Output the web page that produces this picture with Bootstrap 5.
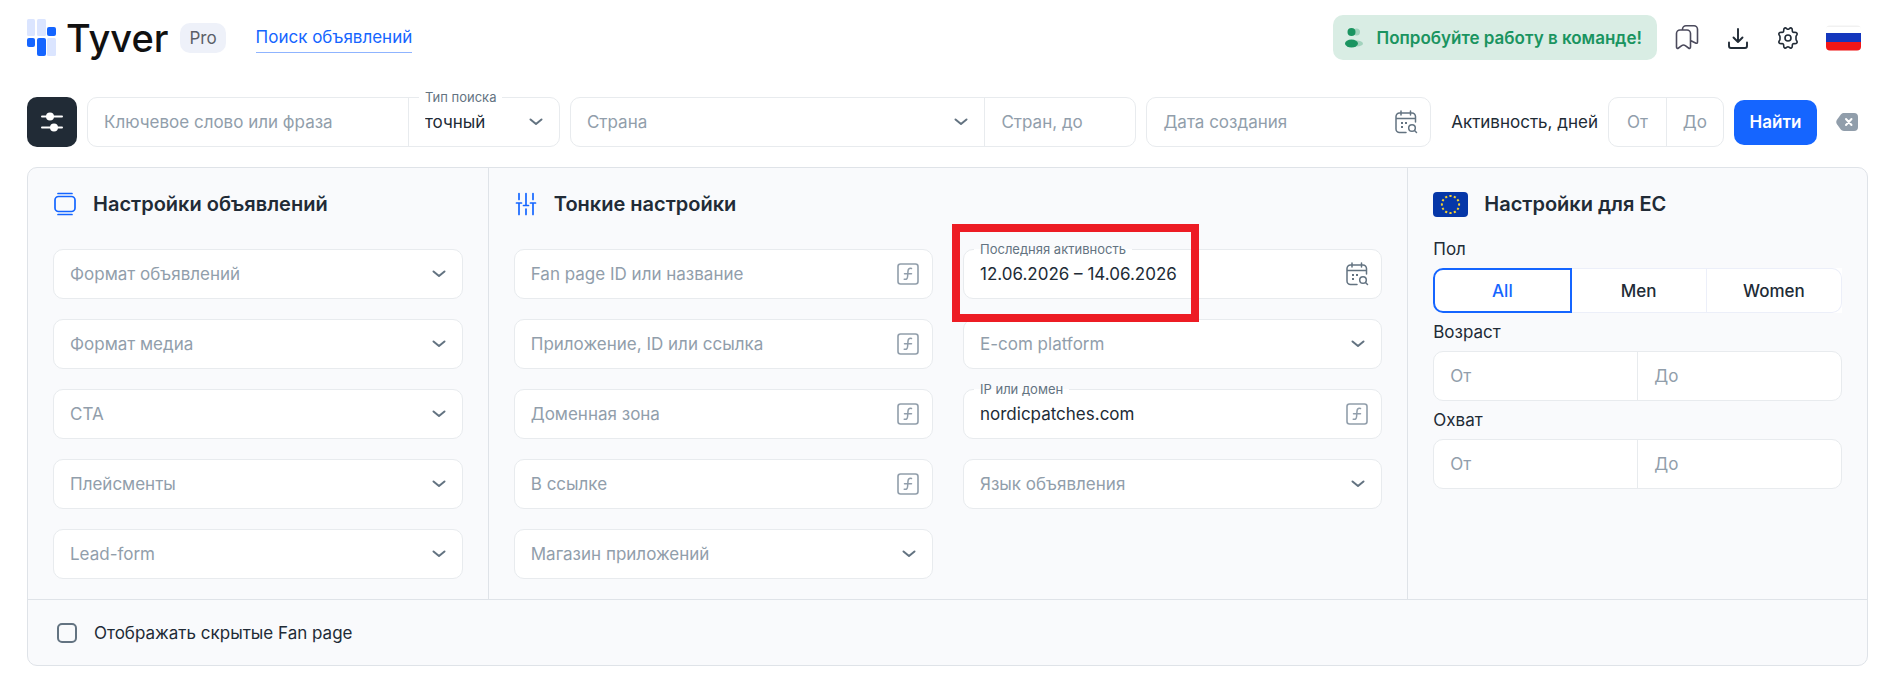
<!DOCTYPE html>
<html lang="ru">
<head>
<meta charset="utf-8">
<meta name="viewport" content="width=device-width, initial-scale=1">
<title>Tyver Pro – Поиск объявлений</title>
<link href="https://cdn.jsdelivr.net/npm/bootstrap@5.3.0/dist/css/bootstrap.min.css" rel="stylesheet">
<style>
:root{--ink:#212b36;--muted:#919eab;--mid:#637381;--line:#e8ebee;--panel-line:#dfe3e8;--brand:#1565ff}
body{font-family:Inter,"Liberation Sans",sans-serif;font-size:17px;line-height:24px;color:var(--ink);background:#fff}
svg{display:block;flex:none}
.page{padding:15px 30px 24px 27px}
.topbar{height:45px}
.brand{gap:10px;color:#111;text-decoration:none}
.brand-name{font-size:38px;line-height:44px;font-weight:500}
.pro-pill{background:#eef1f9;color:#5b5f68;border-radius:10px;padding:3px 9px;font-size:17px;margin:0 30px 0 12px}
.nav-search{color:var(--brand);text-decoration:none;border-bottom:1px solid #8fb4ff;padding:2px 0 3px}
.team-btn{background:#d9ede4;color:#1a9460;border:0;border-radius:10px;height:45px;padding:0 15px 0 12px;gap:13px;font-weight:600}
.tool-btn{border:0;background:none;padding:0;color:var(--ink)}
.tools{gap:26px;margin:0 7px 0 17px}
.search-row{margin-top:37px;gap:10px}
.filter-btn{width:50px;height:50px;background:#212b36;border:0;border-radius:10px;padding:0}
.joined{border:1px solid var(--line);border-radius:10px;background:#fff;height:50px}
.field{position:relative;background:#fff;border:1px solid var(--line);border-radius:10px;height:50px}
.cell{position:relative}
.ctl{display:block;width:100%;height:48px;border:0;background:transparent;padding:0 16px;color:var(--ink);border-radius:10px;outline:0;appearance:none;min-width:0}
.joined>*+*{border-left:1px solid var(--line)}
.ctl::placeholder{color:var(--muted);opacity:1}
.ctl:focus-visible{box-shadow:0 0 0 2px #1565ff55}
select.ctl{padding-right:44px;background:url("data:image/svg+xml,%3Csvg xmlns='http://www.w3.org/2000/svg' width='14' height='8' fill='none' stroke='%23637381' stroke-width='2' stroke-linecap='round' stroke-linejoin='round'%3E%3Cpath d='M1.5 1.5 7 6l5.500-4.500'/%3E%3C/svg%3E") no-repeat right 16px center}
select.empty{color:var(--muted)}
.with-icon{padding-right:50px}
.float-label{position:absolute;top:-11px;left:10px;padding:0 6px;font-size:13px;line-height:20px;color:var(--mid);background:linear-gradient(transparent 50%,#fff 50%);white-space:nowrap}
.field-icon{position:absolute;right:12px;top:0;height:48px;border:0;background:none;padding:0;display:flex;align-items:center}
.w-type,.w-limit{flex:0 0 151px}
.w-keyword{flex:473 1 0}.w-country{flex:567 1 0}.w-date{flex:284 1 0}
.w-days{flex:0 0 116px}
.w-days .ctl{text-align:center;padding:0 4px}
.days-label{margin-left:10px}
.clear-btn{margin:0 10px 0 9px}
.go-btn{height:45px;width:83px;border:0;border-radius:10px;background:var(--brand);color:#fff;font-weight:600;padding:0}
.settings{margin-top:20px;border:1px solid var(--panel-line);border-radius:10px;background:#f9fafc}
.pane{padding:23px 25px 20px}
.pane+.pane{border-left:1px solid var(--panel-line)}
.pane-head{height:26px;gap:16px}
.pane-head h2{font-size:20px;line-height:26px;font-weight:600;margin:0}
.stack{display:grid;gap:20px;margin-top:32px}
.stack-2{grid-template-columns:1fr 1fr;column-gap:30px}
.group-label{display:block;margin:7px 0}
.pane-head+.group-label{margin-top:20px}
.gender{background:#fff;height:45px;border-radius:10px 0 0 10px}
.gender label{flex:1;display:flex;align-items:center;justify-content:center;border:1px solid #eceff9;border-left:0;font-weight:500;cursor:pointer}
.gender label:first-of-type{border-radius:10px 0 0 10px}
.gender label:last-of-type{border-radius:0 10px 10px 0}
.gender .btn-check:checked+label{border:2px solid var(--brand);color:var(--brand)}
.settings-foot{border-top:1px solid var(--panel-line);height:66px;padding:0 29px;gap:17px}
.settings-foot .form-check-input{width:20px;height:20px;margin:0;border:2px solid var(--mid);border-radius:5px;background-color:transparent}
.settings-foot .form-check-input:checked{background-color:var(--brand)}
.highlight{position:absolute;left:-12px;top:-26px;width:247px;height:98px;border:8px solid #ed1c24;pointer-events:none;z-index:2}
</style>
</head>
<body>
<svg class="d-none" xmlns="http://www.w3.org/2000/svg">
  <symbol id="i-func" viewBox="0 0 22 22"><rect x="1" y="1" width="20" height="20" rx="2.500" fill="none" stroke="#919eab" stroke-width="1.600"/><path d="M14.500 5.500c-2.600-.6-3.300.6-3.500 2.600l-.4 5.400c-.2 2.200-1 3.200-3.400 2.700M7.500 10.800h7" fill="none" stroke="#919eab" stroke-width="1.500" stroke-linecap="round"/></symbol>
  <symbol id="i-cal" viewBox="0 0 24 24"><g fill="none" stroke="#637381" stroke-width="1.500" stroke-linecap="round"><path d="M21.500 12V6.500a3.500 3.500 0 0 0-3.500-3.500H5.500A3.500 3.500 0 0 0 2 6.500V19a3.500 3.500 0 0 0 3.500 3.500h6.500M2 8.500h19.500M7 1v4M16.500 1v4"/><circle cx="18" cy="18" r="3.300"/><path d="m20.500 20.500 2 2"/></g><path d="M7 12h2v2H7zM11 12h2v2h-2zM7 16h2v2H7z" fill="#637381"/></symbol>
</svg>
<div class="page">
  <header class="topbar d-flex align-items-center">
    <a class="brand d-flex align-items-center" href="#">
      <svg width="29" height="38" viewBox="0 0 29 38"><g fill="#dbe5ff"><rect width="8" height="17" rx="1.500"/><rect x="10" width="9" height="17" rx="1.500"/><rect x="20" y="19" width="9" height="18" rx="1.500"/></g><g fill="#1565ff"><rect x="20" y="8" width="9" height="9" rx="2"/><rect y="19" width="8" height="9" rx="2"/><rect x="10" y="19" width="9" height="18" rx="2"/></g></svg>
      <span class="brand-name">Tyver</span>
    </a>
    <span class="pro-pill">Pro</span>
    <a class="nav-search" href="#">Поиск объявлений</a>
    <button type="button" class="team-btn d-flex align-items-center ms-auto">
      <svg width="18" height="22" viewBox="0 0 18 22"><g fill="#a2d3bd"><circle cx="11.500" cy="5" r="3.500"/><ellipse cx="12" cy="16.500" rx="6" ry="3"/></g><g fill="#1a9460"><circle cx="6.500" cy="5" r="4"/><ellipse cx="6.500" cy="16.500" rx="6.500" ry="4"/></g></svg>
      <span>Попробуйте работу в команде!</span>
    </button>
    <div class="tools d-flex align-items-center">
      <button type="button" class="tool-btn" aria-label="Закладки"><svg width="26" height="26" viewBox="0 0 26 26" fill="none" stroke="#4b4a5c" stroke-width="1.600" stroke-linejoin="round"><path d="M2.500 8.500A3.500 3.500 0 0 1 6 5h7a3.500 3.500 0 0 1 3.500 3.500V22c0 1.300-1 1.700-2 1l-3.200-2.300c-1.200-.9-2.400-.9-3.600 0L4.500 23c-1 .7-2 .3-2-1zM8.500 5V4.300a3.500 3.500 0 0 1 3.500-3.500h8a3.500 3.500 0 0 1 3.500 3.500V17c0 1.300-.9 1.600-2 1l-5-2.500"/></svg></button>
      <button type="button" class="tool-btn" aria-label="Скачать"><svg width="24" height="24" viewBox="0 0 24 24" fill="none" stroke="#212b36" stroke-width="1.900" stroke-linecap="round" stroke-linejoin="round"><path d="M12 3v13M7.500 11.500 12 16l4.500-4.500M3 16.500V20a2 2 0 0 0 2 2h14a2 2 0 0 0 2-2v-3.500"/></svg></button>
      <button type="button" class="tool-btn" aria-label="Настройки"><svg width="24" height="24" viewBox="0 0 24 24" fill="none" stroke="#212b36" stroke-width="1.600" stroke-linejoin="round"><circle cx="12" cy="12" r="3"/><path d="M8.700 2c1.500-.8 2 1.300 3.300 1.300S13.800 1.200 15.300 2c1.700.9.500 2.600 1.300 3.800.8 1.300 3-.3 4.200 1.200 1.300 1.700-.8 2.200-.8 3.800v2.400c0 1.600 2.100 2.100.8 3.800-1.200 1.500-3.400-.1-4.200 1.200-.8 1.200.4 2.900-1.300 3.800-1.500.8-2-1.300-3.300-1.300S10.200 22.800 8.700 22c-1.700-.9-.5-2.600-1.300-3.800-.8-1.300-3 .3-4.200-1.200-1.300-1.700.8-2.200.8-3.800v-2.400C4 9.200 1.900 8.700 3.200 7c1.200-1.500 3.400.1 4.200-1.200C8.200 4.600 7 2.900 8.700 2z"/></svg></button>
      <button type="button" class="tool-btn" aria-label="Русский"><svg width="35" height="26" viewBox="0 0 35 26"><clipPath id="ru"><rect y=".5" width="35" height="25" rx="4"/></clipPath><g clip-path="url(#ru)"><path fill="#f1f1f1" d="M0 0h35v26H0z"/><path fill="#fff" d="M0 2h35v6H0z"/><path fill="#1437bd" d="M0 8h35v9H0z"/><path fill="#f31616" d="M0 17h35v9H0z"/></g></svg></button>
    </div>
  </header>

  <form class="search-row d-flex align-items-center">
    <button type="button" class="filter-btn d-flex align-items-center justify-content-center" aria-label="Фильтры"><svg width="22" height="20" viewBox="0 0 22 20" stroke="#fff" fill="#fff" stroke-width="2" stroke-linecap="round"><path d="M1 4.500h20M1 15.500h20"/><circle cx="9" cy="4.500" r="3"/><circle cx="13" cy="15.500" r="3"/></svg></button>
    <div class="joined w-keyword d-flex">
      <div class="cell flex-fill"><input class="ctl" type="text" placeholder="Ключевое слово или фраза" aria-label="Ключевое слово или фраза"></div>
      <div class="cell w-type"><label class="float-label" for="type">Тип поиска</label><select class="ctl" id="type"><option>точный</option><option>широкий</option></select></div>
    </div>
    <div class="joined w-country d-flex">
      <div class="cell flex-fill"><select class="ctl empty" aria-label="Страна"><option>Страна</option></select></div>
      <div class="cell w-limit"><input class="ctl" type="text" placeholder="Стран, до" aria-label="Стран, до"></div>
    </div>
    <div class="field w-date"><input class="ctl with-icon" type="text" placeholder="Дата создания" aria-label="Дата создания"><button type="button" class="field-icon" aria-label="Календарь"><svg width="24" height="24"><use href="#i-cal"/></svg></button></div>
    <label for="from" class="days-label text-nowrap">Активность, дней</label>
    <div class="joined w-days d-flex">
      <input class="ctl" id="from" type="text" placeholder="От"><input class="ctl rounded-0" type="text" placeholder="До" aria-label="Активность до">
    </div>
    <button type="submit" class="go-btn">Найти</button>
    <button type="reset" class="tool-btn clear-btn" aria-label="Очистить"><svg width="22" height="18" viewBox="0 0 22 18"><path fill="#919eab" d="M8 0h10a4 4 0 0 1 4 4v10a4 4 0 0 1-4 4H8c-1.500 0-2.500-.6-3.400-1.700L1 11.300C0 9.900 0 8.100 1 6.700l3.600-5C5.500.6 6.500 0 8 0z"/><path d="m10 6 5.500 6M15.500 6 10 12" stroke="#fff" stroke-width="2" stroke-linecap="round"/></svg></button>
  </form>

  <section class="settings">
    <div class="row g-0">
      <div class="col-3 pane">
        <div class="pane-head d-flex align-items-center">
          <svg width="24" height="24" viewBox="0 0 24 24" fill="none" stroke="#1565ff" stroke-width="1.700" stroke-linecap="round"><rect x="2" y="4.500" width="20" height="15" rx="3.500"/><path d="M5 1.500h14M5 22.500h14"/></svg>
          <h2>Настройки объявлений</h2>
        </div>
        <div class="stack">
          <div class="field"><select class="ctl empty" aria-label="Формат объявлений"><option>Формат объявлений</option></select></div>
          <div class="field"><select class="ctl empty" aria-label="Формат медиа"><option>Формат медиа</option></select></div>
          <div class="field"><select class="ctl empty" aria-label="CTA"><option>CTA</option></select></div>
          <div class="field"><select class="ctl empty" aria-label="Плейсменты"><option>Плейсменты</option></select></div>
          <div class="field"><select class="ctl empty" aria-label="Lead-form"><option>Lead-form</option></select></div>
        </div>
      </div>
      <div class="col-6 pane">
        <div class="pane-head d-flex align-items-center">
          <svg width="24" height="24" viewBox="0 0 24 24" fill="none" stroke="#1565ff" stroke-width="1.700" stroke-linecap="round"><path d="M5 1.500v6M5 11v11.500M2.500 11h5M12 1.500v12M9.500 13.500h5M12 17v5.500M19 1.500v6M19 11v11.500M16.500 11h5"/></svg>
          <h2>Тонкие настройки</h2>
        </div>
        <div class="stack stack-2">
          <div class="field"><input class="ctl with-icon" type="text" placeholder="Fan page ID или название" aria-label="Fan page ID или название"><button type="button" class="field-icon" aria-label="Функция"><svg width="24" height="22"><use href="#i-func"/></svg></button></div>
          <div class="field"><label class="float-label" for="last">Последняя активность</label><input class="ctl with-icon" id="last" type="text" value="12.06.2026 – 14.06.2026"><button type="button" class="field-icon" aria-label="Календарь"><svg width="24" height="24"><use href="#i-cal"/></svg></button><div class="highlight"></div></div>
          <div class="field"><input class="ctl with-icon" type="text" placeholder="Приложение, ID или ссылка" aria-label="Приложение, ID или ссылка"><button type="button" class="field-icon" aria-label="Функция"><svg width="24" height="22"><use href="#i-func"/></svg></button></div>
          <div class="field"><select class="ctl empty" aria-label="E-com platform"><option>E-com platform</option></select></div>
          <div class="field"><input class="ctl with-icon" type="text" placeholder="Доменная зона" aria-label="Доменная зона"><button type="button" class="field-icon" aria-label="Функция"><svg width="24" height="22"><use href="#i-func"/></svg></button></div>
          <div class="field"><label class="float-label" for="domain">IP или домен</label><input class="ctl with-icon" id="domain" type="text" value="nordicpatches.com"><button type="button" class="field-icon" aria-label="Функция"><svg width="24" height="22"><use href="#i-func"/></svg></button></div>
          <div class="field"><input class="ctl with-icon" type="text" placeholder="В ссылке" aria-label="В ссылке"><button type="button" class="field-icon" aria-label="Функция"><svg width="24" height="22"><use href="#i-func"/></svg></button></div>
          <div class="field"><select class="ctl empty" aria-label="Язык объявления"><option>Язык объявления</option></select></div>
          <div class="field"><select class="ctl empty" aria-label="Магазин приложений"><option>Магазин приложений</option></select></div>
        </div>
      </div>
      <div class="col-3 pane">
        <div class="pane-head d-flex align-items-center">
          <svg width="35" height="25" viewBox="0 0 35 25"><rect width="35" height="25" rx="4" fill="#0637a8"/><circle cx="17.500" cy="12.500" r="8.600" fill="none" stroke="#f5d02f" stroke-width="2" pathLength="48" stroke-dasharray="2 2" stroke-dashoffset="1"/></svg>
          <h2>Настройки для ЕС</h2>
        </div>
        <span class="group-label" id="sex">Пол</span>
        <div class="gender d-flex" role="group" aria-labelledby="sex">
          <input class="btn-check" type="radio" name="sex" id="s-all" checked><label for="s-all">All</label>
          <input class="btn-check" type="radio" name="sex" id="s-men"><label for="s-men">Men</label>
          <input class="btn-check" type="radio" name="sex" id="s-women"><label for="s-women">Women</label>
        </div>
        <label class="group-label" for="age">Возраст</label>
        <div class="joined d-flex"><input class="ctl" id="age" type="text" placeholder="От"><input class="ctl rounded-0" type="text" placeholder="До" aria-label="Возраст до"></div>
        <label class="group-label" for="reach">Охват</label>
        <div class="joined d-flex"><input class="ctl" id="reach" type="text" placeholder="От"><input class="ctl rounded-0" type="text" placeholder="До" aria-label="Охват до"></div>
      </div>
    </div>
    <div class="settings-foot d-flex align-items-center">
      <input class="form-check-input" type="checkbox" id="hidden-pages"><label for="hidden-pages">Отображать скрытые Fan page</label>
    </div>
  </section>
</div>
<script src="https://cdn.jsdelivr.net/npm/bootstrap@5.3.0/dist/js/bootstrap.bundle.min.js"></script>
</body>
</html>
